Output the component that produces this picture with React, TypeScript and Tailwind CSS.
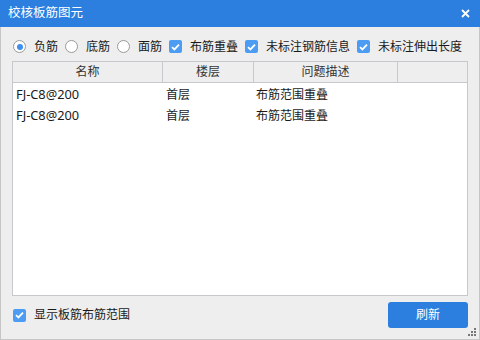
import React from 'react';

const font = { fontFamily: '"Noto Sans", "Noto Sans CJK SC", sans-serif' };

const Radio = ({ checked }: { checked?: boolean }) => (
  <span className="w-[13px] h-[13px] rounded-full border border-[#9a9a9a] bg-white flex items-center justify-center shrink-0">
    {checked && <span className="w-[6px] h-[6px] rounded-full bg-[#3d8ef0]" />}
  </span>
);

const Check = () => (
  <span className="w-[13px] h-[13px] rounded-[2px] bg-[#4b9cf2] flex items-center justify-center shrink-0">
    <svg width="9" height="8" viewBox="0 0 9 8">
      <path d="M1 4.2 L3.4 6.4 L8 1.6" fill="none" stroke="#fff" strokeWidth="1.8" />
    </svg>
  </span>
);

const rows = [
  { name: 'FJ-C8@200', floor: '首层', desc: '布筋范围重叠' },
  { name: 'FJ-C8@200', floor: '首层', desc: '布筋范围重叠' },
];

export default function App() {
  return (
    <div className="w-[480px] h-[340px] flex flex-col text-[12px] text-[#1a1a1a]" style={font}>
      <div className="h-[27px] bg-[#2c7fdf] flex items-center justify-between pl-[8px] pr-[10px] text-white">
        <span className="text-[12.5px]">校核板筋图元</span>
        <svg width="9" height="9" viewBox="0 0 9 9">
          <path d="M1 1 L8 8 M8 1 L1 8" stroke="#fff" strokeWidth="1.8" />
        </svg>
      </div>

      <div className="flex-1 flex flex-col bg-[#eeeeee] border-x border-b border-[#c6c6c6] px-[11px]">
        <div className="pt-[12px] h-[27px] flex items-center gap-[7px] pl-[1px]">
          <label className="flex items-center gap-[8px]"><Radio checked />负筋</label>
          <label className="flex items-center gap-[8px]"><Radio />底筋</label>
          <label className="flex items-center gap-[8px]"><Radio />面筋</label>
          <label className="flex items-center gap-[8px]"><Check />布筋重叠</label>
          <label className="flex items-center gap-[8px]"><Check />未标注钢筋信息</label>
          <label className="flex items-center gap-[8px]"><Check />未标注伸出长度</label>
        </div>

        <div className="mt-[7px] flex-1 flex flex-col border border-[#c8c8cc] bg-white">
          <div className="h-[21px] flex bg-[#eeeeee] border-b border-[#c8c8cc] text-[#333]">
            <div className="w-[150px] border-r border-[#c8c8cc] flex items-center justify-center">名称</div>
            <div className="w-[91px] border-r border-[#c8c8cc] flex items-center justify-center">楼层</div>
            <div className="w-[144px] border-r border-[#c8c8cc] flex items-center justify-center">问题描述</div>
            <div className="flex-1" />
          </div>
          <div className="pt-[1px]">
            {rows.map((r, i) => (
              <div key={i} className="h-[21px] flex items-center">
                <div className="w-[150px] pl-[3px] text-[12.8px]">{r.name}</div>
                <div className="w-[91px] pl-[3px]">{r.floor}</div>
                <div className="w-[144px] pl-[2px]">{r.desc}</div>
              </div>
            ))}
          </div>
        </div>

        <div className="pt-[6px] pb-[11px] flex items-center justify-between">
          <label className="flex items-center gap-[8px] pl-[1px]"><Check />显示板筋布筋范围</label>
          <button className="w-[80px] h-[26px] rounded-[3px] bg-[#2c7fdf] text-white">刷新</button>
        </div>
      </div>
      <div className="relative">
        <svg className="absolute right-[4px] bottom-[4px]" width="8" height="8" viewBox="0 0 8 8">
          <rect x="6" y="0" width="2" height="2" fill="#777" />
          <rect x="3" y="3" width="2" height="2" fill="#777" />
          <rect x="6" y="3" width="2" height="2" fill="#777" />
          <rect x="0" y="6" width="2" height="2" fill="#777" />
          <rect x="3" y="6" width="2" height="2" fill="#777" />
          <rect x="6" y="6" width="2" height="2" fill="#777" />
        </svg>
      </div>
    </div>
  );
}
